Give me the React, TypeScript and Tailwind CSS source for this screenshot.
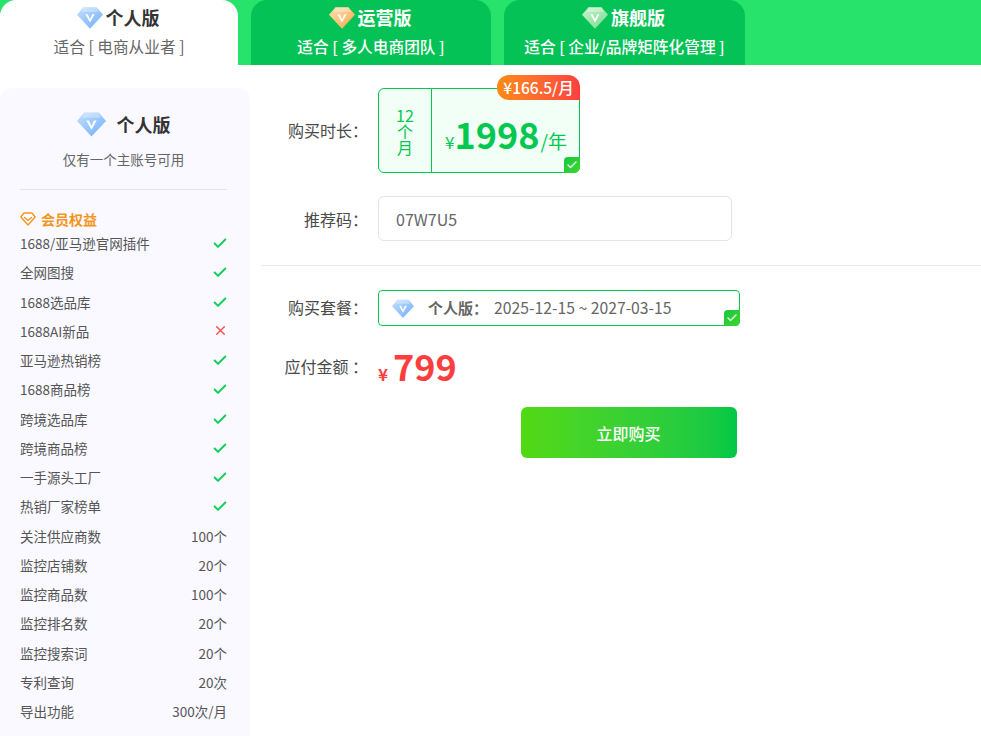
import { Check, X } from "lucide-react"

type Tone = "blue" | "orange" | "green"

const GEM_COLORS: Record<Tone, [string, string]> = {
  blue: ["#c4defc", "#6fb0fb"],
  orange: ["#fde0b4", "#fba94a"],
  green: ["#c9f3cf", "#74dc8c"],
}

const FEATURES: { name: string; value: string | boolean }[] = [
  { name: "1688/亚马逊官网插件", value: true },
  { name: "全网图搜", value: true },
  { name: "1688选品库", value: true },
  { name: "1688AI新品", value: false },
  { name: "亚马逊热销榜", value: true },
  { name: "1688商品榜", value: true },
  { name: "跨境选品库", value: true },
  { name: "跨境商品榜", value: true },
  { name: "一手源头工厂", value: true },
  { name: "热销厂家榜单", value: true },
  { name: "关注供应商数", value: "100个" },
  { name: "监控店铺数", value: "20个" },
  { name: "监控商品数", value: "100个" },
  { name: "监控排名数", value: "20个" },
  { name: "监控搜索词", value: "20个" },
  { name: "专利查询", value: "20次" },
  { name: "导出功能", value: "300次/月" },
]

function Gem({ tone, className }: { tone: Tone; className: string }) {
  const [light, dark] = GEM_COLORS[tone]
  const id = `gem-${tone}`
  return (
    <svg viewBox="0 0 28 24" className={className}>
      <defs>
        <linearGradient id={id} x1="0" y1="0" x2="1" y2="1">
          <stop offset="0" stopColor={light} />
          <stop offset="1" stopColor={dark} />
        </linearGradient>
      </defs>
      <path d="M7 1h14l7 8-14 15L0 9z" fill={`url(#${id})`} />
      <path d="M7 1h14l2 5H5z" fill="#ffffff" opacity="0.3" />
      <path d="M9 8.5h2.6l2.4 5.5 2.4-5.5H19l-5 9z" fill="#ffffff" />
    </svg>
  )
}

function CornerCheck() {
  return (
    <span className="absolute -right-px -bottom-px flex h-4 w-4 items-center justify-center rounded-tl-[4px] rounded-br-[6px] bg-gradient-to-br from-[#14c640] to-[#3ed62a]">
      <Check className="h-3 w-3 text-[#d9f8df]" strokeWidth={3} />
    </span>
  )
}

function Tab({ tone, name, desc, active, width }: { tone: Tone; name: string; desc: string; active?: boolean; width: string }) {
  return (
    <div
      className={
        active
          ? `flex h-[65px] ${width} flex-col items-center rounded-t-2xl bg-white pt-[4px] text-[#333333]`
          : `flex h-[65px] ${width} flex-col items-center rounded-t-2xl bg-[#04c256] pt-[4px] text-white`
      }
    >
      <div className="flex h-[26px] items-center gap-[3px] pr-[2px]">
        <Gem tone={tone} className="h-[23px] w-[26px]" />
        <span className="text-[18px] font-bold leading-[26px]">{name}</span>
      </div>
      <div className={active ? "mt-[5px] text-[15.7px] leading-[24px] text-[#666666]" : "mt-[5px] text-[15.7px] font-medium leading-[24px]"}>
        {desc}
      </div>
    </div>
  )
}

function FeatureRow({ name, value }: { name: string; value: string | boolean }) {
  return (
    <div className="flex h-[29.25px] items-center justify-between pr-[23px] text-[13.5px] text-[#555555]">
      <span>{name}</span>
      {value === true && <Check className="mr-[-1px] h-4 w-4 translate-y-[0.5px] text-[#10cf5a]" strokeWidth={3} />}
      {value === false && <X className="mr-[-1px] h-[15px] w-[15px] text-[#ff5252]" strokeWidth={2.4} />}
      {typeof value === "string" && <span>{value}</span>}
    </div>
  )
}

export default function App() {
  return (
    <div className="h-[736px] w-[981px] overflow-hidden bg-white font-['Noto_Sans_CJK_SC','Noto_Sans',sans-serif]">
      <div className="flex h-[65px] gap-[13px] bg-[#27e36b]">
        <Tab tone="blue" name="个人版" desc="适合 [ 电商从业者 ]" active width="w-[238px]" />
        <Tab tone="orange" name="运营版" desc="适合 [ 多人电商团队 ]" width="w-[240px]" />
        <Tab tone="green" name="旗舰版" desc="适合 [ 企业/品牌矩阵化管理 ]" width="w-[241px]" />
      </div>

      <div className="mt-[23px] flex items-start">
        <aside className="h-[680px] w-[250px] shrink-0 rounded-xl bg-[#f9f9ff] pl-5 pt-[20px]">
          <div className="flex h-[32px] items-center justify-center gap-[11px] pr-[23px]">
            <Gem tone="blue" className="h-[26px] w-[29px]" />
            <span className="text-[18px] font-bold text-[#333333]">个人版</span>
          </div>
          <p className="mt-[8px] pr-[23px] text-center text-[13.5px] leading-[22px] text-[#666666]">仅有一个主账号可用</p>
          <div className="mt-[19px] h-px w-[207px] bg-[#e3e3ea]" />
          <div className="mt-[19px] flex h-[20px] items-center gap-[5px] text-[14px] font-bold text-[#f5941d]">
            <svg viewBox="0 0 16 14" className="h-[14px] w-4" fill="none" stroke="#f5941d" strokeWidth="1.3">
              <path d="M4 1h8l3.2 4L8 13 .8 5z" strokeLinejoin="round" />
              <path d="M4.5 5.5 8 8.5l3.5-3" strokeLinecap="round" />
            </svg>
            <span>会员权益</span>
          </div>
          <div className="mt-[-0.5px]">
            {FEATURES.map((f) => (
              <FeatureRow key={f.name} name={f.name} value={f.value} />
            ))}
          </div>
        </aside>

        <main className="ml-[11px] flex-1">
          {/* duration + code */}
          <div className="flex items-center">
            <label className="-mt-[2px] w-[107px] text-right text-[16px] text-[#4a4a4a]">购买时长：</label>
            <div className="relative ml-[10px] flex h-[85px] w-[202px] rounded-[6px] border border-[#03c84f] bg-[#f1fff6] text-[#03c84f]">
              <div className="flex w-[53px] flex-col items-center justify-center border-r border-[#03c84f] text-[16px] leading-[16px]">
                <span>12</span>
                <span>个</span>
                <span>月</span>
              </div>
              <div className="flex flex-1 items-baseline justify-center pt-[14px] pl-[1px]">
                <span className="text-[17px]">¥</span>
                <span className="text-[36px] font-bold leading-[60px]">1998</span>
                <span className="ml-[1px] text-[19px] font-normal">/年</span>
              </div>
              <span className="absolute -top-[14px] -right-px flex h-[25px] w-[83px] items-center justify-center rounded-t-[12px] rounded-bl-[12px] bg-gradient-to-r from-[#fd8a10] to-[#fd3e3e] text-[15.5px] font-medium text-white">
                ¥166.5/月
              </span>
              <CornerCheck />
            </div>
          </div>

          <div className="mt-[23px] flex items-center">
            <label className="w-[107px] text-right text-[16px] text-[#4a4a4a]">推荐码：</label>
            <div className="ml-[10px] flex h-[45px] w-[354px] items-center rounded-[6px] border border-[#e2e4e8] pl-[17px] text-[16px] text-[#666666]">
              07W7U5
            </div>
          </div>

          <div className="mt-[24px] h-px bg-[#e8eaec]" />

          {/* plan + amount */}
          <div className="mt-[24px] flex items-center">
            <label className="-mt-[2px] w-[107px] text-right text-[16px] text-[#4a4a4a]">购买套餐：</label>
            <div className="relative ml-[10px] flex h-[36px] w-[362px] items-center rounded-[4px] border border-[#03c84f] pl-[13px] text-[#666666]">
              <Gem tone="blue" className="h-[19px] w-[22px]" />
              <span className="ml-[14px] text-[15px] font-bold">个人版：</span>
              <span className="ml-[6px] text-[15.75px]">2025-12-15 ~ 2027-03-15</span>
              <CornerCheck />
            </div>
          </div>

          <div className="mt-[16px] flex items-center">
            <label className="mt-[2px] w-[107px] text-right text-[16px] text-[#4a4a4a]">应付金额 ：</label>
            <div className="ml-[10px] flex h-[46px] items-baseline text-[#fd3e3e]">
              <span className="text-[17px] font-bold">¥</span>
              <span className="ml-[5px] text-[36px] font-bold leading-[46px]">799</span>
            </div>
          </div>

          <button className="ml-[260px] mt-[19px] block h-[51px] w-[216px] rounded-[6px] bg-gradient-to-r from-[#52d911] to-[#00c846] text-[16px] font-medium text-white">
            <span className="-ml-[1px]">立即购买</span>
          </button>
        </main>
      </div>
    </div>
  )
}
